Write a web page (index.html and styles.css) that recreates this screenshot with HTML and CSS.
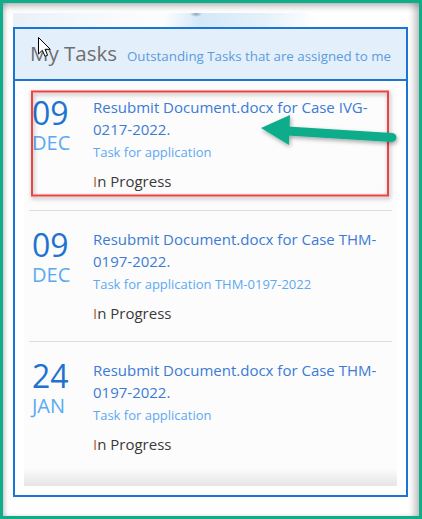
FILE: index.html
```html
<!DOCTYPE html>
<html lang="en">
<head>
<meta charset="utf-8">
<title>My Tasks</title>
<link rel="stylesheet" href="styles.css">
</head>
<body>
<div class="frame">
  <div class="banner"></div>
  <section class="panel">
    <header class="panel-head">
      <h2 class="panel-title">My Tasks</h2>
      <span class="panel-sub">Outstanding Tasks that are assigned to me</span>
    </header>
    <ul class="task-list">
      <li class="task">
        <div class="task-date"><span class="day">09</span><span class="month">DEC</span></div>
        <div class="task-body">
          <a class="task-title">Resubmit Document.docx for Case IVG-0217-2022.</a>
          <div class="task-desc">Task for application</div>
          <div class="task-status"><span class="initial">I</span>n Progress</div>
        </div>
      </li>
      <li class="task">
        <div class="task-date"><span class="day">09</span><span class="month">DEC</span></div>
        <div class="task-body">
          <a class="task-title">Resubmit Document.docx for Case THM-0197-2022.</a>
          <div class="task-desc">Task for application THM-0197-2022</div>
          <div class="task-status"><span class="initial">I</span>n Progress</div>
        </div>
      </li>
      <li class="task">
        <div class="task-date"><span class="day">24</span><span class="month">JAN</span></div>
        <div class="task-body">
          <a class="task-title">Resubmit Document.docx for Case THM-0197-2022.</a>
          <div class="task-desc">Task for application</div>
          <div class="task-status"><span class="initial">I</span>n Progress</div>
        </div>
      </li>
    </ul>
  </section>
  <svg class="annotations" viewBox="0 0 422 519" width="422" height="519">
    <defs>
      <filter id="sh" x="-20%" y="-20%" width="140%" height="140%">
        <feDropShadow dx="1" dy="2" stdDeviation="2" flood-color="#000" flood-opacity="0.35"/>
      </filter>
    </defs>
    <rect x="32" y="91.5" width="356" height="104" fill="none" stroke="#ef4242" stroke-width="2" filter="url(#sh)"/>
    <g filter="url(#sh)" fill="#10ad8b">
      <line x1="287" y1="131" x2="392" y2="137.5" stroke="#10ad8b" stroke-width="9" stroke-linecap="round"/>
      <polygon points="261,128 290,115 289,145"/>
    </g>
    <path d="M38.5 37.5 L38.5 54 L42.3 50.3 L45 56.3 L47.6 55.2 L45 49.3 L50.3 49.3 Z" fill="#fff" stroke="#000" stroke-width="1" stroke-linejoin="round"/>
  </svg>
</div>
</body>
</html>
```
FILE: styles.css
```css
* { box-sizing: border-box; }
html, body { margin: 0; padding: 0; background: #fff; }
body { font-family: "Open Sans", "Noto Sans", sans-serif; }

.frame {
  position: relative;
  width: 422px;
  height: 519px;
  border: 3px solid #10ad8b;
  background: #fff;
  padding: 10px 0 0 10px;
  box-shadow:
    inset 0 7px 6px -3px rgba(0,0,0,0.22),
    inset -7px 0 6px -2px rgba(0,0,0,0.22),
    inset 4px 0 4px -2px rgba(0,0,0,0.18);
}

.banner {
  width: 395px;
  height: 14px;
  background:
    radial-gradient(ellipse 6px 3px at 183px 1px, rgba(100,130,165,0.7) 0, rgba(100,130,165,0) 100%),
    linear-gradient(100deg, rgba(255,255,255,0) 150px, rgba(205,229,247,0.85) 185px, rgba(215,234,248,0.7) 245px, rgba(255,255,255,0) 300px),
    linear-gradient(90deg, #e8f0f8 0, #f3f7fb 60px, #fbfcfe 130px, #ffffff 330px);
}

.panel {
  width: 395px;
  height: 470px;
  border: 2px solid #1b76d3;
  background: #fff;
  display: flex;
  flex-direction: column;
}

.panel-head {
  height: 52px;
  flex: none;
  background: #e3effa;
  border-bottom: 2px solid #1b76d3;
  display: flex;
  align-items: baseline;
  gap: 10px;
  padding: 12px 0 0 15px;
}
.panel-title {
  margin: 0;
  font-size: 20.5px;
  line-height: 24px;
  font-weight: 400;
  color: #6e6e6e;
}
.panel-sub {
  font-size: 13.3px;
  color: #5b9ce0;
}

.task-list {
  list-style: none;
  margin: 0 9px;
  padding: 0 5px;
  height: 405px;
  overflow: hidden;
  background: linear-gradient(to bottom, #fcfcfc 0, #fcfcfc calc(100% - 18px), #e5e5e5 100%);
}

.task {
  display: flex;
  padding: 17px 0 17px;
  border-top: 1px solid #dedede;
}
.task:first-child {
  border-top: 0;
  padding-top: 15px;
  padding-bottom: 18px;
}

.task-date {
  width: 64px;
  flex: none;
  padding-left: 3px;
  display: flex;
  flex-direction: column;
}
.day {
  font-size: 32px;
  line-height: 34px;
  color: #1e73d0;
}
.month {
  font-size: 20px;
  line-height: 26px;
  color: #5aaaf2;
}

.task-body {
  flex: 1;
  padding-right: 10px;
}
.task-title {
  display: block;
  font-size: 15px;
  line-height: 22px;
  color: #3b7bd6;
  text-decoration: none;
}
.task-desc {
  margin-top: 3px;
  font-size: 13px;
  line-height: 18px;
  color: #5ea8f2;
}
.task-status {
  margin-top: 9px;
  font-size: 15px;
  line-height: 22px;
  color: #3a3a3a;
}
.task-status .initial { color: #a8682c; }

.annotations {
  position: absolute;
  left: -3px;
  top: -3px;
  pointer-events: none;
}
```
